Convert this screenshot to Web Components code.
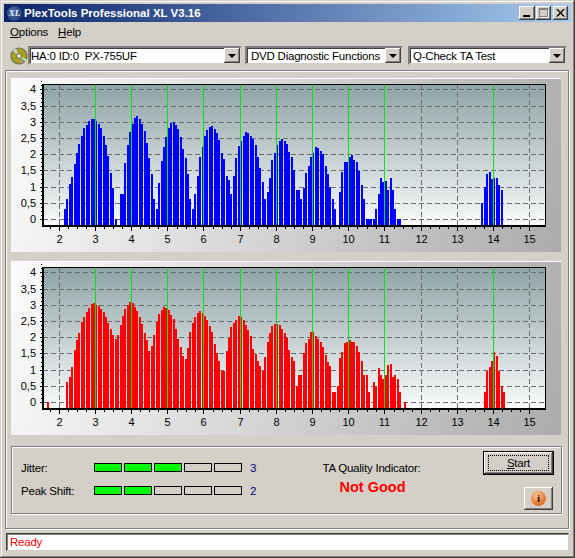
<!DOCTYPE html>
<html lang="en">
<head>
<meta charset="UTF-8">
<title>PlexTools Professional XL V3.16</title>
<style>
  html, body { margin: 0; padding: 0; background: #d4d0c8; }
  body { font: 11.5px "Liberation Sans", Arial, sans-serif; letter-spacing: -.22px; color: #000; }
</style>
</head>
<body>
<xl-window>
  <xl-titlebar>PlexTools Professional XL V3.16</xl-titlebar>
  <xl-menubar>
    <span><u>O</u>ptions</span>
    <span><u>H</u>elp</span>
  </xl-menubar>
  <xl-toolbar>
    <xl-combo style="width:214px;--pad:1px">HA:0 ID:0  PX-755UF</xl-combo>
    <xl-combo style="width:158px;--pad:4px">DVD Diagnostic Functions</xl-combo>
    <xl-combo style="width:159px;--pad:3px;margin-left:2px">Q-Check TA Test</xl-combo>
  </xl-toolbar>
  <xl-frame>
    <ta-chart color="#0000ff" series="blue"></ta-chart>
    <ta-chart color="#ff0000" series="red"></ta-chart>
    <ta-results></ta-results>
  </xl-frame>
  <xl-status>Ready</xl-status>
</xl-window>

<script>
  // tops of the bars, read at 3x scale (baseline is 450), as [first index, values]; 450 = no bar
  const SERIES = {
    blue: [
      [2, [402,372,327,306,267,234,207,183,159,150,138,132,132,138,147,159,183,210,243,294,339,432]],
      [25, [357,357,264,210,171,147,129,123,132,147,168,204,249,297,372,402,
            324,258,216,186,159,144,141,150,162,186,222,249,297,372,
            402,357,303,246,216,183,165,156,153,162,174,195,234,252,303,315,357,303,249,213,198,183,171,174,183,192,
            210,246,279,321,372,351,309,255,234,210,198,192,198,207,231,246,285,345,345,372,339,294,273,246,234,216,
            219,228,237,273,297,336,372,402,450,351,291,261,261,246,240,255,261,288,330,372,432,432,432,432,402,357,
            309,321,318,345,309,345,402,432,432]],
      [175, [384,336,297,291,312,309,309,330,345]]
    ],
    red: [
      [-5, [432]],
      [3, [372,357,327,276,246,225,192,177,162,150,138,135,141,144,153,162,177,195,213,231,243,231,201,174,153,141,
           132,135,147,159,177,198,225,246,279,264,231,192,168,156,147,150,156,171,183,213,243,267,294,303,270,222,
           195,177,165,159,165,174,186,204,222,258,285,309,339,339,279,240,207,195,186,174,177,186,201,216,234,273,
           288,309,324,339,297,252,225,204,198,198,201,213,225,240,276,297,309,384,351,351,285,255,243,222,222,234,
           243,252,267,291,312,324,402,402,384,300,282,255,252,246,252,252,264,282,309,351,351,402,450,372,384,330,
           351,363,351,321,318,357,351,363,402,450,432]],
      [176, [402,339,327,309,282,294,339,384,402]]
    ]
  };

  // pixel column of each whole x value
  const COLS = { 2: 59, 3: 95, 4: 131, 5: 167, 6: 203, 7: 240, 8: 276, 9: 312, 10: 348, 11: 384, 12: 421, 13: 457, 14: 493, 15: 529 };

  class XlWindow extends HTMLElement {
    constructor() {
      super();
      this.attachShadow({ mode: 'open' }).innerHTML = `
        <style>
          :host {
            display: flex; flex-direction: column; box-sizing: border-box;
            width: 575px; height: 558px; padding: 4px; background: #d4d0c8;
            box-shadow: inset -1px -1px #404040, inset 1px 1px #d4d0c8, inset -2px -2px #808080, inset 2px 2px #fff;
          }
        </style>
        <slot></slot>`;
    }
  }

  class XlTitlebar extends HTMLElement {
    constructor() {
      super();
      this.attachShadow({ mode: 'open' }).innerHTML = `
        <style>
          :host {
            display: flex; align-items: center; height: 18px; flex: none; letter-spacing: 0;
            background: linear-gradient(90deg, #0a246a, #a6caf0);
            color: #fff; font: bold 11.5px "Liberation Sans", Arial, sans-serif;
          }
          .logo {
            width: 15px; height: 15px; margin: 0 2px 0 3px; border-radius: 50%; flex: none;
            background: radial-gradient(circle at 40% 40%, #4a6aa8, #1c3468);
            color: #e8eef8; font: italic bold 9px/15px "Liberation Serif", serif; text-align: center;
          }
          .text { flex: 1; white-space: nowrap; }
          .btns { display: flex; gap: 1px; margin-right: 3px; }
          .btn {
            width: 15px; height: 14px; box-sizing: border-box; background: #d4d0c8; display: block;
            box-shadow: inset -1px -1px #404040, inset 1px 1px #fff, inset -2px -2px #808080;
          }
          .btn:first-child { width: 16px; }
          .btn:last-child { margin-left: 1px; }
          svg { display: block; }
        </style>
        <span class="logo">XL</span>
        <span class="text"><slot></slot></span>
        <span class="btns">
          <span class="btn"><svg width="16" height="14"><rect x="4" y="9" width="7" height="2" fill="#000"/></svg></span>
          <span class="btn"><svg width="15" height="14"><rect x="3.5" y="2.5" width="8" height="8" fill="none" stroke="#808080"/><rect x="3" y="2" width="9" height="2" fill="#808080"/><path d="M12.5 4v7.5H5" fill="none" stroke="#fff"/></svg></span>
          <span class="btn"><svg width="15" height="14"><path d="M3.5 3l7 7.5M4.5 3l7 7.5M10.5 3l-7 7.5M11.5 3l-7 7.5" stroke="#000" fill="none"/></svg></span>
        </span>`;
    }
  }

  class XlMenubar extends HTMLElement {
    constructor() {
      super();
      this.attachShadow({ mode: 'open' }).innerHTML = `
        <style>
          :host { display: flex; align-items: center; gap: 10px; height: 20px; padding-left: 6px; flex: none; }
        </style>
        <slot></slot>`;
    }
  }

  class XlToolbar extends HTMLElement {
    constructor() {
      super();
      this.attachShadow({ mode: 'open' }).innerHTML = `
        <style>
          :host { display: flex; align-items: center; height: 19px; margin: 4px 0 5px; padding-left: 6px; flex: none; }
          svg { width: 18px; height: 18px; flex: none; }
          .items { display: flex; gap: 3px; }
        </style>
        <svg viewBox="0 0 18 18">
          <circle cx="9" cy="9" r="8" fill="#a8a020" stroke="#6e6e58" stroke-width="1.2"/>
          <path d="M9 9L2.5 3.5A8 8 0 0 1 6 1.5z" fill="#c8d0d0"/>
          <path d="M9 9l7.5 3.5A8 8 0 0 1 12 16.5z" fill="#d8e8d0"/>
          <path d="M9 9l3.5 7.5L14 15.5z" fill="#e03898"/>
          <path d="M9 9l5 6.5 1.2-1.2z" fill="#30c040"/>
          <circle cx="9" cy="9" r="2.4" fill="#e8e8d8" stroke="#55552a" stroke-width=".8"/>
        </svg>
        <span class="items"><slot></slot></span>`;
    }
  }

  class XlCombo extends HTMLElement {
    constructor() {
      super();
      this.attachShadow({ mode: 'open' }).innerHTML = `
        <style>
          :host {
            display: flex; align-items: center; box-sizing: border-box; height: 19px;
            background: #fff; white-space: pre;
            border: 2px solid; border-color: #808080 #d4d0c8 #d4d0c8 #808080;
            box-shadow: inset 1px 1px #404040;
          }
          .text { flex: 1; padding-left: var(--pad, 2px); overflow: hidden; }
          .arrow {
            width: 16px; height: 15px; background: #d4d0c8; display: flex; align-items: center; justify-content: center;
            box-shadow: inset -1px -1px #404040, inset 1px 1px #fff, inset -2px -2px #808080;
          }
          .arrow i { border: 4px solid transparent; border-top: 4px solid #000; border-bottom: 0; }
        </style>
        <span class="text"><slot></slot></span>
        <span class="arrow"><i></i></span>`;
    }
  }

  class XlFrame extends HTMLElement {
    constructor() {
      super();
      this.attachShadow({ mode: 'open' }).innerHTML = `
        <style>
          :host {
            display: flex; flex-direction: column; box-sizing: border-box; height: 459px; flex: none;
            margin: 0 2px 0 1px; padding: 7px 5px 0 5px;
            border: 1px solid #808080; box-shadow: inset 1px 1px #fff, 1px 1px #fff;
          }
        </style>
        <slot></slot>`;
    }
  }

  // one panel with a plot; coordinates are window pixels of the upper panel
  class TaChart extends HTMLElement {
    constructor() {
      super();
      this.attachShadow({ mode: 'open' });
    }
    connectedCallback() {
      const color = this.getAttribute('color');
      const id = this.getAttribute('series');
      const X = v => 59 + 36.18 * (v - 2);
      const Y = v => 219 - v * 32.4;
      const L = 43, R = 546, T = 84, B = 225;
      let s = '';

      s += `<rect x="${L}" y="${T}" width="${R - L}" height="${B - T}" fill="url(#bg-${id})"/>`;
      for (let v = 0; v <= 4; v += 0.5) {
        const y = Math.round(Y(v)) + 0.5;
        s += `<line x1="${L}" x2="${R}" y1="${y}" y2="${y}" class="grid"/>`;
      }
      for (let u = 2; u <= 15; u++) {
        const x = COLS[u] + 0.5;
        s += `<line x1="${x}" x2="${x}" y1="${T}" y2="${B}" class="grid"/>`;
      }

      SERIES[id].forEach(([first, tops]) => tops.forEach((top, n) => {
        if (top >= 450) return;
        const x = Math.round(59.2 + 2.412 * (first + n));
        const h = Math.round((450 - top) / 3);
        s += `<rect x="${x}" y="${B - h}" width="2" height="${h}" fill="${color}"/>`;
      }));

      [3, 4, 5, 6, 7, 8, 9, 10, 11, 14].forEach(u => {
        s += `<rect x="${COLS[u]}" y="${T}" width="1" height="${B - T}" fill="#00e800"/>`;
      });

      // spines and ticks
      s += `<rect x="${L}" y="${T}" width="${R - L}" height="1" fill="#000"/>`;
      s += `<rect x="${R - 1}" y="${T}" width="1" height="${B - T}" fill="#000"/>`;
      s += `<rect x="42" y="${T}" width="2" height="${B - T + 2}" fill="#000"/>`;
      s += `<rect x="42" y="${B}" width="${R - 42}" height="2" fill="#000"/>`;
      for (let k = 0; k <= 34; k++) {
        const y = Math.round(Y(k * 0.125));
        const major = k % 4 === 0;
        s += `<rect x="${major ? 40 : 41}" y="${y}" width="${major ? 2 : 1}" height="1" fill="#000"/>`;
      }
      for (let q = 0; q <= 53; q++) {
        const major = (q + 3) % 4 === 0;
        const v = 1.75 + q * 0.25;
        const x = major ? COLS[v] : Math.round(X(v));
        if (x >= R) break;
        s += `<rect x="${x}" y="227" width="1" height="${major ? 4 : 2}" fill="#000"/>`;
      }

      for (let v = 0; v <= 4; v += 0.5) {
        s += `<text x="36" y="${Y(v) + 4}" text-anchor="end">${String(v).replace('.', ',')}</text>`;
      }
      for (let u = 2; u <= 15; u++) {
        s += `<text x="${COLS[u] + 0.5}" y="243" text-anchor="middle">${u}</text>`;
      }

      this.shadowRoot.innerHTML = `
        <style>
          :host {
            display: block; width: 550px; height: 174px; flex: none; box-sizing: border-box;
            margin-bottom: 9px;
            background: linear-gradient(105deg, #fbfbfb, #acacac);
            box-shadow: inset 0 1px #fff;
          }
          svg { display: block; }
          rect { shape-rendering: crispEdges; }
          .grid { stroke: #6e6e6e; stroke-dasharray: 5 3; shape-rendering: crispEdges; }
          text { font: 11px "Liberation Sans", Arial, sans-serif; letter-spacing: 0; fill: #000; }
        </style>
        <svg width="550" height="174" viewBox="11 78 550 174">
          <defs>
            <linearGradient id="bg-${id}" x1="0" y1="0" x2="0" y2="1">
              <stop offset="0" stop-color="#8fa4a7"/>
              <stop offset="1" stop-color="#f9fafa"/>
            </linearGradient>
          </defs>
          ${s}
        </svg>`;
    }
  }

  class TaMeter extends HTMLElement {
    constructor() {
      super();
      this.attachShadow({ mode: 'open' });
    }
    connectedCallback() {
      const value = +this.getAttribute('value');
      let segs = '';
      for (let i = 0; i < 5; i++) segs += `<i class="${i < value ? 'on' : ''}"></i>`;
      this.shadowRoot.innerHTML = `
        <style>
          :host { display: flex; align-items: center; height: 23px; }
          .label { width: 73px; }
          .segs { display: flex; gap: 2px; }
          i { display: block; box-sizing: border-box; width: 28px; height: 9px; border: 1px solid #000; background: #d4d0c8; }
          i.on { background: #00ff00; }
          .value { margin-left: 8px; color: #000080; }
        </style>
        <span class="label"><slot></slot></span>
        <span class="segs">${segs}</span>
        <span class="value">${value}</span>`;
    }
  }

  class XlButton extends HTMLElement {
    constructor() {
      super();
      this.attachShadow({ mode: 'open' }).innerHTML = `
        <style>
          :host {
            display: flex; align-items: center; justify-content: center; box-sizing: border-box;
            background: #d4d0c8;
            box-shadow: inset -1px -1px #404040, inset 1px 1px #fff, inset -2px -2px #808080;
          }
          :host([default]) {
            border: 1px solid #000; position: relative;
          }
          :host([default]) .focus {
            position: absolute; inset: 3px 4px; border: 1px dotted #000;
          }
        </style>
        <span class="focus"></span>
        <slot></slot>`;
    }
  }

  class TaResults extends HTMLElement {
    constructor() {
      super();
      this.attachShadow({ mode: 'open' }).innerHTML = `
        <style>
          :host {
            display: flex; box-sizing: border-box; width: 551px; height: 68px; margin-top: 2px; flex: none;
            border: 1px solid #808080; box-shadow: inset 1px 1px #fff, 1px 1px #fff;
          }
          .meters { width: 239px; margin-left: 9px; padding-top: 9px; flex: none; }
          .quality { width: 223px; padding-top: 13px; text-align: center; flex: none; line-height: 16px; }
          .verdict { margin-top: 3px; padding-left: 2px; color: #ff0000; font: bold 14.5px/16px "Liberation Sans", Arial, sans-serif; letter-spacing: 0; }
          .actions { width: 71px; padding-top: 4px; display: flex; flex-direction: column; align-items: flex-end; flex: none; }
          #start { width: 71px; height: 24px; }
          #info { width: 29px; height: 23px; margin-top: 12px; margin-right: 1px; }
          .dot {
            width: 15px; height: 15px; border-radius: 50%; text-align: center;
            background: radial-gradient(circle at 40% 30%, #ffc898, #e87a30 60%, #b85a18);
            font: bold 11px/15px "Liberation Serif", serif; color: #201008;
          }
        </style>
        <div class="meters">
          <ta-meter value="3">Jitter:</ta-meter>
          <ta-meter value="2">Peak Shift:</ta-meter>
        </div>
        <div class="quality">
          <div>TA Quality Indicator:</div>
          <div class="verdict">Not Good</div>
        </div>
        <div class="actions">
          <xl-button id="start" default><span><u>S</u>tart</span></xl-button>
          <xl-button id="info"><span class="dot">i</span></xl-button>
        </div>`;
    }
  }

  class XlStatus extends HTMLElement {
    constructor() {
      super();
      this.attachShadow({ mode: 'open' }).innerHTML = `
        <style>
          :host {
            display: flex; align-items: center; box-sizing: border-box; height: 18px; flex: none;
            margin: 4px 2px 0 2px; padding-left: 3px; background: #fff; color: #ff0000;
            border: 1px solid; border-color: #404040 #d4d0c8 #d4d0c8 #404040;
            box-shadow: inset 1px 1px #808080;
          }
        </style>
        <slot></slot>`;
    }
  }

  customElements.define('xl-window', XlWindow);
  customElements.define('xl-titlebar', XlTitlebar);
  customElements.define('xl-menubar', XlMenubar);
  customElements.define('xl-toolbar', XlToolbar);
  customElements.define('xl-combo', XlCombo);
  customElements.define('xl-frame', XlFrame);
  customElements.define('ta-chart', TaChart);
  customElements.define('ta-meter', TaMeter);
  customElements.define('xl-button', XlButton);
  customElements.define('ta-results', TaResults);
  customElements.define('xl-status', XlStatus);
</script>
</body>
</html>
